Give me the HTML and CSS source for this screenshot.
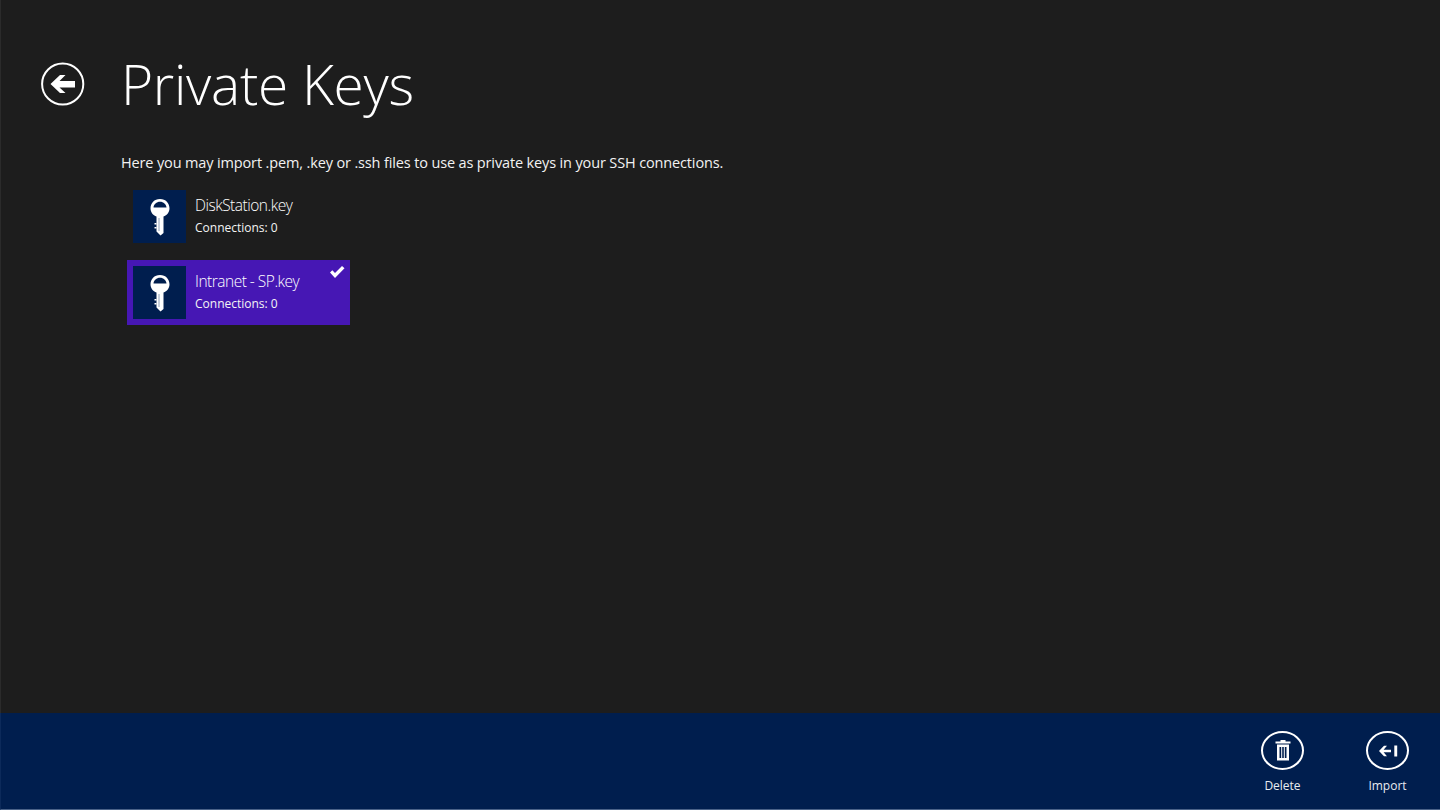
FILE: index.html
```html
<!DOCTYPE html>
<html lang="en">
<head>
<meta charset="utf-8">
<title>Private Keys</title>
<link rel="stylesheet" href="styles.css">
</head>
<body>
<div class="screen">
  <main class="content">
    <header class="header">
      <button class="back" aria-label="Back">
        <svg width="46" height="46" viewBox="0 0 46 46"><circle cx="22.700" cy="23" r="20.600" fill="none" stroke="#fff" stroke-width="2"/><path d="M10.500 23 20 14H25.500L19.500 20H35V26.500H19.500L25.500 32H20Z" fill="#fff"/></svg>
      </button>
      <h1 class="title">Private Keys</h1>
    </header>
    <p class="intro">Here you may import .pem, .key or .ssh files to use as private keys in your SSH connections.</p>
    <ul class="keys">
      <li class="key">
        <span class="tile"><svg width="24" height="38" viewBox="0 0 24 38"><path fill-rule="evenodd" fill="#fff" d="M12 1C6.2 1 2.5 5.3 2.5 10.200C2.500 14.200 5 17.300 8.500 18.600V33.500L12.500 37.500L15.500 35V18.600C19 17.300 21.500 14.200 21.500 10.200C21.500 5.300 17.800 1 12 1ZM5.500 9.500C5.800 6.200 8.500 3.700 12 3.700C15.500 3.700 18.200 6.200 18.500 9.500Z"/><path d="M8.500 25H6.500V26.500H8.500ZM8.500 29H6.500V30.500H8.500Z" fill="#fff"/><path d="M11 20V33" stroke="#8fa0b8" stroke-width="1"/></svg></span>
        <span class="info"><span class="name">DiskStation.key</span><span class="meta">Connections: 0</span></span>
      </li>
      <li class="key selected">
        <span class="tile"><svg width="24" height="38" viewBox="0 0 24 38"><path fill-rule="evenodd" fill="#fff" d="M12 1C6.2 1 2.5 5.3 2.5 10.200C2.500 14.200 5 17.300 8.500 18.600V33.500L12.500 37.500L15.500 35V18.600C19 17.300 21.500 14.200 21.500 10.200C21.500 5.300 17.800 1 12 1ZM5.500 9.500C5.800 6.200 8.500 3.700 12 3.700C15.500 3.700 18.200 6.200 18.500 9.500Z"/><path d="M8.500 25H6.500V26.500H8.500ZM8.500 29H6.500V30.500H8.500Z" fill="#fff"/><path d="M11 20V33" stroke="#8fa0b8" stroke-width="1"/></svg></span>
        <span class="info"><span class="name">Intranet - SP.key</span><span class="meta">Connections: 0</span></span>
        <svg class="check" width="16" height="14" viewBox="0 0 16 14"><path d="M1 7.500 3.300 5.200 6 8 13 1 15.500 3.300 6 13Z" fill="#fff"/></svg>
      </li>
    </ul>
  </main>
  <footer class="appbar">
    <button class="cmd">
      <span class="ring"><svg width="16" height="21" viewBox="0 0 16 21"><path fill="#fff" fill-rule="evenodd" d="M5.500 0H10.500V1.500H15.500V3.500H.5V1.500H5.500ZM2 4.500H14V20.500H2ZM4.500 7V18H6.200V7ZM7.200 7V18H8.800V7ZM9.800 7V18H11.500V7Z"/></svg></span>
      <span class="cmd-label">Delete</span>
    </button>
    <button class="cmd">
      <span class="ring"><svg width="20" height="12" viewBox="0 0 20 12"><path fill="#fff" d="M1 6 6 .8H9L5.600 4.800H13V7.200H5.600L9 11.200H6ZM16.300 .5H19.200V11.500H16.300Z"/></svg></span>
      <span class="cmd-label">Import</span>
    </button>
  </footer>
</div>
</body>
</html>
```

FILE: styles.css
```css
* { box-sizing: border-box; }
html, body { margin: 0; height: 100%; }
body {
  background: #1d1d1d;
  color: #fff;
  font-family: "Open Sans", "Liberation Sans", sans-serif;
  overflow: hidden;
}
.screen {
  width: 1440px;
  height: 810px;
  display: flex;
  flex-direction: column;
  border-left: 1px solid #2b2b2b;
}
.content {
  flex: 1;
  padding: 46px 0 0 39px;
}
.header {
  display: flex;
  align-items: center;
  height: 76px;
}
.back {
  width: 46px;
  height: 46px;
  padding: 0;
  background: none;
  border: 0;
  display: block;
}
.title {
  margin: 0 0 0 35px;
  font-size: 55px;
  line-height: 76px;
  font-weight: 300;
  letter-spacing: -0.3px;
  white-space: nowrap;
}
.intro {
  margin: 29px 0 0 81px;
  font-size: 14.5px;
  line-height: 24px;
  letter-spacing: -0.14px;
  color: #f2f2f2;
}
.keys {
  list-style: none;
  margin: 9px 0 0 87px;
  padding: 0;
  display: flex;
  flex-direction: column;
  gap: 11px;
  width: 223px;
}
.key {
  height: 65px;
  padding: 6px;
  display: flex;
  position: relative;
}
.key.selected { background: #4617b4; }
.tile {
  width: 53px;
  height: 53px;
  background: #001e4e;
  display: flex;
  align-items: center;
  justify-content: center;
  flex: none;
}
.info {
  margin-left: 9px;
  display: flex;
  flex-direction: column;
}
.name {
  font-size: 15.5px;
  font-weight: 300;
  line-height: 20px;
  margin-top: 5px;
  color: #fff;
  letter-spacing: -0.5px;
}
.meta {
  font-size: 12px;
  line-height: 16px;
  margin-top: 5px;
  color: #f4f4f4;
}
.check {
  position: absolute;
  top: 5px;
  right: 5px;
}
.appbar {
  height: 97px;
  margin-left: -1px;
  background: #001e4e;
  border-left: 1px solid #0c2a5a;
  border-bottom: 1px solid #4a6288;
  display: flex;
  justify-content: flex-end;
  padding: 18px 0 0 0;
}
.cmd {
  width: 105px;
  padding: 0;
  background: none;
  border: 0;
  color: #fff;
  font-family: inherit;
  display: flex;
  flex-direction: column;
  align-items: center;
  height: 66px;
}
.ring {
  width: 43px;
  height: 43px;
  border: 2px solid #fff;
  border-radius: 50%;
  display: flex;
  align-items: center;
  justify-content: center;
}
.cmd-label {
  margin-top: 5px;
  font-size: 12px;
  line-height: 22px;
  color: #e8ebf0;
}
```
